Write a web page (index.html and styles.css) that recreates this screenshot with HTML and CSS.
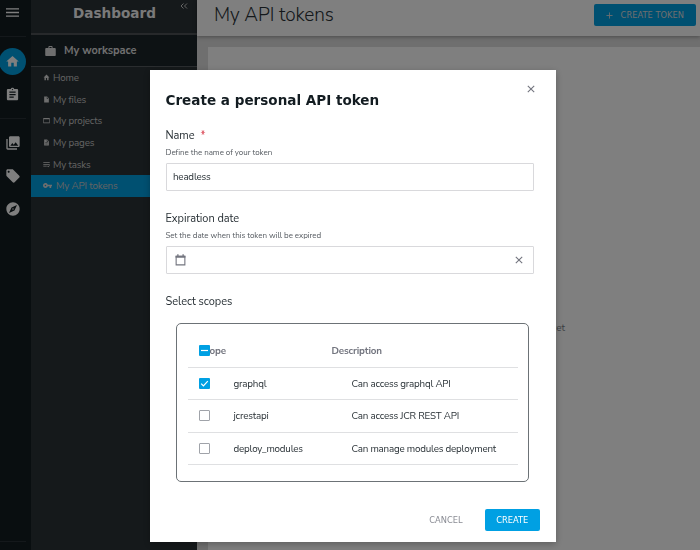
FILE: index.html
```html
<!DOCTYPE html>
<html lang="en">
<head>
<meta charset="utf-8">
<title>My API tokens</title>
<link rel="stylesheet" href="styles.css">
</head>
<body>
<div class="app">
  <nav class="rail">
    <svg class="icon-menu" viewBox="3 6 18 12"><path d="M3 18h18v-2H3v2zm0-5h18v-2H3v2zm0-7v2h18V6H3z"/></svg>
    <hr class="rail-line">
    <span class="rail-home"><svg viewBox="0 0 24 24"><path d="M10 20v-6h4v6h5v-8h3L12 3 2 12h3v8z"/></svg></span>
    <svg class="rail-icon clipboard" viewBox="0 0 24 24"><path d="M19 3h-4.180C14.400 1.840 13.300 1 12 1s-2.400.84-2.820 2H5c-1.100 0-2 .9-2 2v14c0 1.100.9 2 2 2h14c1.100 0 2-.9 2-2V5c0-1.100-.9-2-2-2zm-7 0c.55 0 1 .45 1 1s-.45 1-1 1-1-.45-1-1 .45-1 1-1zm2 14H7v-2h7v2zm3-4H7v-2h10v2zm0-4H7V7h10v2z"/></svg>
    <hr class="rail-line second">
    <svg class="rail-icon images" viewBox="0 0 24 24"><path d="M22 16V4c0-1.100-.9-2-2-2H8c-1.100 0-2 .9-2 2v12c0 1.100.9 2 2 2h12c1.100 0 2-.9 2-2zm-11-4l2.030 2.710L16 11l4 5H8l3-4zM2 6v14c0 1.100.9 2 2 2h14v-2H4V6H2z"/></svg>
    <svg class="rail-icon tag" viewBox="0 0 24 24"><path d="M21.410 11.580l-9-9C12.050 2.220 11.550 2 11 2H4c-1.100 0-2 .9-2 2v7c0 .55.22 1.050.59 1.420l9 9c.36.36.86.58 1.410.58s1.050-.22 1.410-.59l7-7c.37-.36.59-.86.59-1.410s-.23-1.060-.59-1.420zM5.500 7C4.670 7 4 6.330 4 5.500S4.670 4 5.500 4 7 4.670 7 5.500 6.330 7 5.500 7z"/></svg>
    <svg class="rail-icon compass" viewBox="0 0 24 24"><path d="M12 10.900c-.61 0-1.100.49-1.100 1.100s.49 1.100 1.100 1.100 1.100-.49 1.100-1.100-.49-1.100-1.100-1.100zM12 2C6.480 2 2 6.480 2 12s4.480 10 10 10 10-4.480 10-10S17.520 2 12 2zm2.190 12.190L6 18l3.810-8.190L18 6l-3.810 8.190z"/></svg>
    <hr class="rail-line last">
  </nav>
  <aside class="sidebar">
    <header class="side-head"><h2>Dashboard</h2>
      <svg class="collapse" viewBox="0 0 8 6"><path d="M3.500.5 1 3l2.500 2.500M7 .5 4.500 3 7 5.500"/></svg>
    </header>
    <div class="workspace"><svg viewBox="2 2 20 19"><path d="M20 6h-4V4c0-1.110-.89-2-2-2h-4c-1.110 0-2 .89-2 2v2H4c-1.110 0-2 .89-2 2v11c0 1.110.89 2 2 2h16c1.110 0 2-.89 2-2V8c0-1.110-.89-2-2-2zm-6 0h-4V4h4v2z"/></svg><span>My workspace</span></div>
    <ul class="menu">
      <li><svg viewBox="0 0 24 24"><path d="M10 21v-7h4v7h5v-9h3L12 2 2 12h3v9z"/></svg><span>Home</span></li>
      <li><svg viewBox="0 0 24 24"><path d="M4 2h10l6 6v14H4zM13 3.500V9h5.500z"/></svg><span>My files</span></li>
      <li><svg viewBox="0 0 24 24"><path d="M1 3h22v18H1zm2 5v11h18V8z"/></svg><span>My projects</span></li>
      <li><svg viewBox="0 0 24 24"><path d="M14 2H4v20h16V8zM16 18H8v-2h8zm0-4H8v-2h8zm-3-5V3.500L18.500 9z"/></svg><span>My pages</span></li>
      <li><svg viewBox="0 0 24 24"><path d="M1 4h22v2.500H1zm0 6h22v2.500H1zm0 6h12v2.500H1zm13 1 2-1 2 2 4-4 1 2-5 5z"/></svg><span>My tasks</span></li>
      <li class="active"><svg viewBox="1 6 22 12"><path d="M12.650 10C11.830 7.670 9.610 6 7 6c-3.310 0-6 2.690-6 6s2.690 6 6 6c2.610 0 4.830-1.670 5.650-4H17v4h4v-4h2v-4H12.650zM7 14c-1.100 0-2-.9-2-2s.9-2 2-2 2 .9 2 2-.9 2-2 2z"/></svg><span>My API tokens</span></li>
    </ul>
  </aside>
  <main class="main">
    <header class="topbar"><h1>My API tokens</h1>
      <button class="btn create-token"><svg viewBox="0 0 8 8"><path d="M4 .5v7M.5 4h7"/></svg>CREATE TOKEN</button>
    </header>
    <section class="panel"><p>You have no API tokens yet</p></section>
  </main>
</div>
<div class="overlay">
  <form class="dialog">
    <div class="dialog-head"><h3>Create a personal API token</h3><svg class="cross" viewBox="0 0 8 8"><path d="m.8.8 6.400 6.400M7.200.8.800 7.200"/></svg></div>
    <section class="field"><label>Name</label><b class="required">*</b>
      <p class="help">Define the name of your token</p>
      <div class="input"><span>headless</span></div>
    </section>
    <section class="field"><label>Expiration date</label>
      <p class="help">Set the date when this token will be expired</p>
      <div class="input date">
        <svg class="calendar" viewBox="0 0 10 11"><path class="frame" d="M1 2.200h8v7.800H1z"/><path d="M.5 1.500h9v2h-9zM2 .3h1.200v2H2zM6.800.3H8v2H6.800z"/></svg>
        <svg class="cross" viewBox="0 0 8 8"><path d="m.8.8 6.400 6.400M7.200.8.800 7.200"/></svg>
      </div>
    </section>
    <section class="field scopes-field"><label>Select scopes</label></section>
    <div class="scopes">
      <div class="row head"><span class="box on"><svg viewBox="0 0 11 11"><path d="M2 5.500h7"/></svg></span><span>ope</span><span>Description</span></div>
      <div class="row"><span class="box on"><svg viewBox="0 0 11 11"><path d="m2.200 5.700 2.200 2.200 4.400-4.700"/></svg></span><span>graphql</span><span>Can access graphql API</span></div>
      <div class="row"><span class="box"></span><span>jcrestapi</span><span>Can access JCR REST API</span></div>
      <div class="row"><span class="box"></span><span>deploy_modules</span><span>Can manage modules deployment</span></div>
    </div>
    <footer class="actions"><button type="button" class="btn cancel">CANCEL</button><button type="button" class="btn create">CREATE</button></footer>
  </form>
</div>
</body>
</html>
```

FILE: styles.css
```css
* { box-sizing: border-box; }
body { margin: 0; width: 700px; height: 550px; overflow: hidden; font-family: "Nunito Sans", Nunito, Lato, sans-serif; }
h1, h2, h3, p, ul { margin: 0; padding: 0; }
svg { display: block; flex: none; }
button { border: 0; }
.app { display: grid; grid-template-columns: 31px 166px 1fr; height: 550px; background: #dedede; }

.rail { display: flex; flex-direction: column; background: #121c20; }
.rail svg { fill: #fff; }
.icon-menu { width: 13px; height: 9px; margin: 8px 0 0 6px; }
.rail-line { width: 26px; height: 1px; border: 0; margin: 19px 0 11px; background: #293136; flex: none; }
.rail-home { width: 27px; height: 27px; margin-left: -1px; border-radius: 50%; background: #00a0e3; display: grid; place-items: center; }
.rail-home svg { width: 15px; height: 15px; }
.rail-icon { width: 16px; height: 16px; margin-left: 4.500px; }
.clipboard { width: 15px; height: 15px; margin-top: 12px; margin-left: 5px; }
.rail-line.second { margin: 16px 0 16px; }
.tag { margin-top: 17px; }
.compass { margin-top: 16.500px; }
.rail-line.last { margin: auto 0 8px; }

.sidebar { background: #2a3236; color: #fff; min-width: 0; }
.side-head { display: flex; height: 35px; border-bottom: 2px solid #4e5357; padding-left: 42px; }
.side-head h2 { font: bold 13.600px/26px "DejaVu Sans", sans-serif; width: 107px; color: #f4f4f4; }
.collapse { width: 8px; height: 6px; margin-top: 3px; fill: none; stroke: #ddd; stroke-width: .9; }
.workspace { display: flex; align-items: center; gap: 8px; height: 32px; padding-left: 14px; background: #1a2429; border-bottom: 1px solid #555b5f; color: #ddd; font-size: 11px; font-weight: 700; letter-spacing: -.05px; }
.workspace svg { width: 11px; height: 10px; fill: #ddd; }
.menu { list-style: none; }
.menu li { display: flex; align-items: center; height: 21.600px; padding-left: 12px; gap: 3px; font-size: 9.800px; letter-spacing: -.15px; color: #c6c6c6; white-space: nowrap; }
.menu svg { width: 7px; height: 7px; fill: #ddd; }
.menu .active { background: #00a0e3; gap: 4px; }
.menu .active svg { width: 9px; height: 5px; }

.main { display: flex; flex-direction: column; min-width: 0; }
.topbar { display: flex; justify-content: space-between; height: 36px; padding: 4px 4.500px 0 17px; background: #fff; box-shadow: 0 1px 4px #0005; }
.topbar h1 { font-size: 19px; font-weight: 300; line-height: 22px; letter-spacing: -.08px; color: #293136; }
.btn { font: 8.300px "DejaVu Sans", sans-serif; border-radius: 2px; padding: 0; display: flex; align-items: center; justify-content: center; }
.create-token { width: 101.500px; height: 22px; background: #00a0e3; color: #ddd; gap: 8px; }
.create-token svg { width: 7px; height: 7px; stroke: #ddd; }
.panel { flex: 1; margin: 11px 0 0 11px; background: #fff; padding: 274px 135px 0 0; color: #777e86; font-size: 10px; text-align: right; }

.overlay { position: fixed; inset: 0; background: #00000080; padding: 70px 0 0 149.500px; }
.dialog { width: 406.500px; height: 472px; background: #fff; box-shadow: 0 2px 7px #0004; padding: 0 22px 0 16px; display: flex; flex-direction: column; color: #293136; }
.dialog-head { display: flex; justify-content: space-between; height: 58px; }
.dialog h3 { font: bold 13.550px/16px "DejaVu Sans", sans-serif; padding-top: 22px; color: #131c21; white-space: nowrap; }
.cross { width: 8px; height: 8px; stroke: #73757f; stroke-width: 1.100; fill: none; }
.dialog-head .cross { margin: 15px -1px 0 0; }
.field { height: 83px; font-size: 11px; line-height: 16px; letter-spacing: -.05px; }
.required { color: #d9404f; font-weight: 400; margin-left: 6px; }
.help { font-size: 8px; line-height: 11px; margin-top: 3px; color: #555a60; }
.input { height: 28px; border: 1px solid #d9d9dc; border-radius: 1px; margin-top: 5px; padding: 0 10px 0 6.500px; display: flex; align-items: center; font-size: 9.800px; letter-spacing: -.2px; }
.date { justify-content: space-between; padding-left: 8px; }
.calendar { width: 11px; height: 12px; fill: #73757f; }
.calendar .frame { fill: none; stroke: #73757f; }
.scopes-field { height: 29px; }
.scopes { width: 353px; height: 159px; margin-left: 10.500px; border: 1px solid #6c7276; border-radius: 5px; padding: 11px 10.500px 0; font-size: 9.800px; letter-spacing: -.2px; }
.row { display: grid; grid-template-columns: 46px 118px 1fr; align-items: center; height: 32.600px; border-bottom: 1px solid #dfe0e2; white-space: nowrap; }
.row.head { grid-template-columns: 22px 122px 1fr; color: #73757f; font-weight: 700; letter-spacing: -.15px; }
.box { width: 11px; height: 11px; margin-left: 11px; border: 1px solid #a0a3a9; border-radius: 1px; }
.box.on { border: 0; background: #00a0e3; }
.box svg { stroke: #fff; stroke-width: 1.200; fill: none; }
.actions { display: flex; margin-top: 27px; justify-content: flex-end; margin-right: -5.500px; }
.create { width: 54.500px; height: 22px; background: #00a0e3; color: #fff; }
.cancel { width: 34px; height: 22px; background: none; color: #8a8c94; margin-right: 22px; }
```
